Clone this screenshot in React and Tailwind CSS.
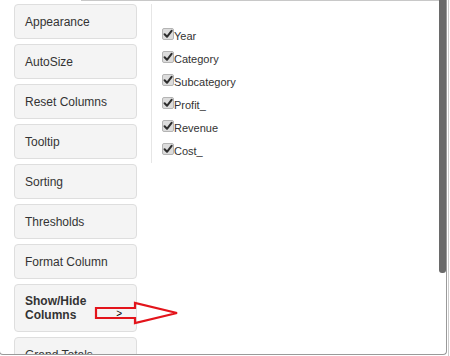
const buttons = ['Appearance', 'AutoSize', 'Reset Columns', 'Tooltip', 'Sorting', 'Thresholds', 'Format Column']

const columns = ['Year', 'Category', 'Subcategory', 'Profit_', 'Revenue', 'Cost_']

const CheckBox = () => (
  <span className="flex items-center justify-center w-[12px] h-[12px] shrink-0 rounded-[2px] border border-[#b4b4b4] bg-[#dcdcdc]">
    <svg width="10" height="10" viewBox="0 0 10 10" aria-hidden="true">
      <path d="M1.6 5.2 L4 7.8 L8.6 1.8" fill="none" stroke="#2e2e2e" strokeWidth="2" strokeLinecap="round" strokeLinejoin="round" />
    </svg>
  </span>
)

export default function App() {
  return (
    <div
      className="relative flex w-[450px] h-[356px] overflow-hidden bg-white text-[#333]"
      style={{ fontFamily: '"Liberation Sans", Arial, sans-serif' }}
    >
      {/* ── Popup panel ───────────────────────────────────────────── */}
      <div className="relative -ml-px w-[448px] h-[355px] shrink-0 flex flex-col overflow-hidden border-x border-b border-[#9a9a9a] rounded-b-[4px]">
        {/* top edge line (starts partway in) */}
        <div className="h-px ml-[81px] bg-[#c8c8c8] shrink-0" />

        <div className="flex flex-1 min-h-0">
          {/* Left: menu buttons */}
          <div className="w-[151px] shrink-0 pt-[3px] pl-[14px] flex flex-col gap-[5px]">
            {buttons.map((b) => (
              <div
                key={b}
                className="w-[123px] h-[35px] shrink-0 flex items-center px-[10px] text-[12px] bg-[#f4f4f4] border border-[#dedede] rounded-[4px]"
              >
                {b}
              </div>
            ))}
            <div className="w-[123px] h-[48px] shrink-0 flex items-center pl-[10px] text-[12px] font-bold leading-[14px] bg-[#f4f4f4] border border-[#dedede] rounded-[4px]">
              <div className="flex-1">Show/Hide Columns</div>
              <span className="mt-[11px] mr-[14px] text-[10px] font-normal text-black">&gt;</span>
            </div>
            <div className="w-[123px] h-[35px] shrink-0 flex items-center px-[10px] text-[12px] bg-[#f4f4f4] border border-[#dedede] rounded-[4px]">
              Grand Totals
            </div>
          </div>

          {/* Right: column visibility list */}
          <div className="self-start mt-[3px] border-l border-[#e6e6e6] pl-[10px] pt-[24px] pb-[8px] flex flex-col gap-[11px]">
            {columns.map((c) => (
              <label key={c} className="flex items-start h-[12px]">
                <CheckBox />
                <span className="mt-[2px] text-[11px] leading-[12px] text-[#333]">{c}</span>
              </label>
            ))}
          </div>
        </div>

        {/* Scrollbar thumb */}
        <div className="absolute right-0 top-0 w-[7px] h-[273px] bg-[#6a6a6a] rounded-b-[3px]" />
      </div>

      {/* page edge behind the popup */}
      <div className="ml-px w-px h-full bg-[#cdcdcd]" />

      {/* Red annotation arrow */}
      <svg
        className="absolute left-[94px] top-[301px]"
        width="86"
        height="24"
        viewBox="0 0 86 24"
        aria-hidden="true"
      >
        <polygon
          points="2,7 41,7 41,2 83,12 41,22 41,17 2,17"
          fill="none"
          stroke="#e3141b"
          strokeWidth="2.2"
          strokeLinejoin="miter"
        />
      </svg>
    </div>
  )
}
